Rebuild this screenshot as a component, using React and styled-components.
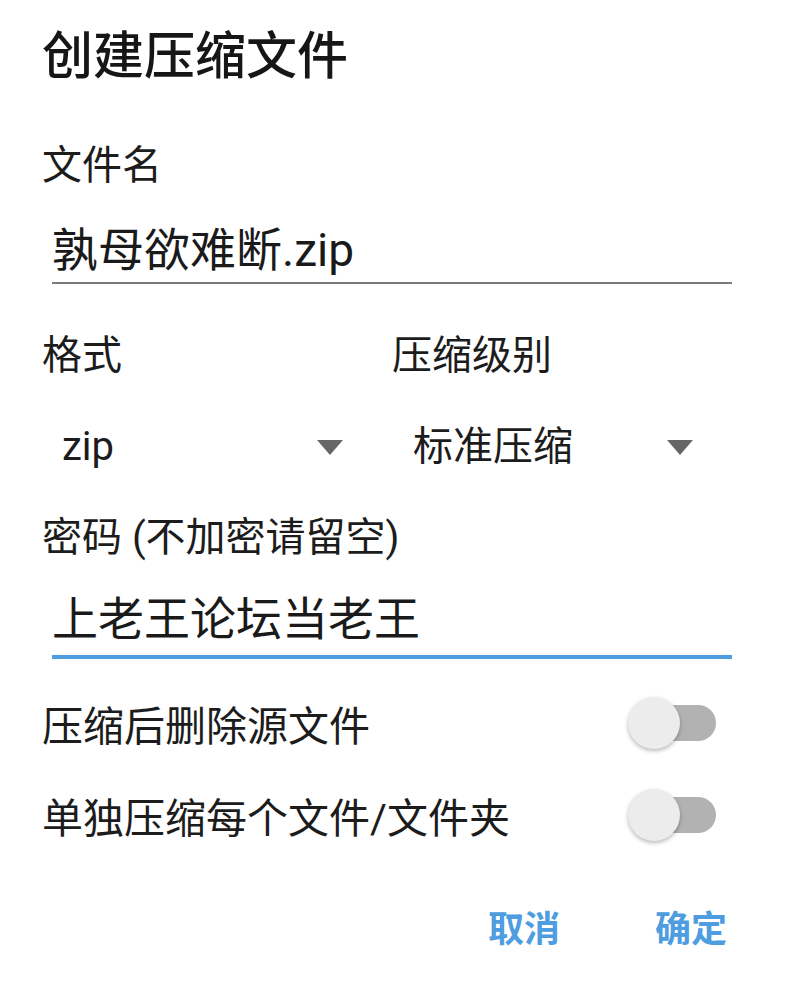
import React from 'react';
import styled, { createGlobalStyle } from 'styled-components';

const Global = createGlobalStyle`
  body {
    margin: 0;
    background: #ffffff;
    font-family: Roboto, "Noto Sans CJK SC", sans-serif;
    color: #1c1c1c;
  }
`;

const Dialog = styled.div`
  width: 800px;
  height: 1000px;
  box-sizing: border-box;
  padding: 27px 68px 0 42px;
  display: flex;
  flex-direction: column;
`;

const Title = styled.div`
  height: 60px;
  line-height: 60px;
  font-size: 51px;
  font-weight: 500;
  color: #161616;
`;

const Label = styled.div`
  height: 40px;
  line-height: 40px;
  font-size: 40px;
  margin-top: ${p => p.$top}px;
  white-space: nowrap;
`;

const Input = styled.div`
  margin: ${p => p.$top}px 0 0 10px;
  height: 54px;
  line-height: 54px;
  font-size: 46px;
  padding-bottom: ${p => p.$pad}px;
  border-bottom: ${p => p.$focus ? '4px solid #4d9de0' : '2px solid #7a7a7a'};
  color: #1a1a1a;
`;

const Columns = styled.div`
  display: grid;
  grid-template-columns: 350px 350px;
  margin-top: ${p => p.$top}px;
`;

const Select = styled.div`
  height: 50px;
  display: flex;
  align-items: center;
  justify-content: space-between;
  padding: 0 49px 0 ${p => p.$indent}px;
  font-size: 40px;
  line-height: 50px;
`;

const Caret = styled.span`
  width: 0;
  height: 0;
  border-left: 13px solid transparent;
  border-right: 13px solid transparent;
  border-top: 15px solid #666666;
`;

const SwitchRow = styled.div`
  height: 60px;
  margin-top: ${p => p.$top}px;
  display: flex;
  align-items: center;
  justify-content: space-between;
  font-size: 41px;
`;

const Switch = styled.div`
  position: relative;
  width: 88px;
  height: 52px;
  margin-right: 16px;
`;

const Track = styled.div`
  position: absolute;
  left: 12px;
  top: 8px;
  width: 76px;
  height: 36px;
  border-radius: 18px;
  background: #b2b2b2;
`;

const Thumb = styled.div`
  position: absolute;
  left: 0;
  top: 0;
  width: 52px;
  height: 52px;
  border-radius: 50%;
  background: #ececec;
  box-shadow: 0 2px 4px rgba(0, 0, 0, 0.28);
`;

const Actions = styled.div`
  margin-top: 60px;
  height: 50px;
  display: flex;
  justify-content: flex-end;
  align-items: center;
  gap: 95px;
  padding-right: 5px;
`;

const Action = styled.div`
  font-size: 36px;
  font-weight: 700;
  color: #4d9de0;
  line-height: 50px;
`;

function Toggle() {
  return (
    <Switch>
      <Track />
      <Thumb />
    </Switch>
  );
}

export default function App() {
  return (
    <>
      <Global />
      <Dialog>
        <Title>创建压缩文件</Title>
        <Label $top={59}>文件名</Label>
        <Input $top={37} $pad={5}>孰母欲难断.zip</Input>
        <Columns $top={52}>
          <Label $top={0}>格式</Label>
          <Label $top={0}>压缩级别</Label>
        </Columns>
        <Columns $top={46}>
          <Select $indent={20}>zip<Caret /></Select>
          <Select $indent={21}>标准压缩<Caret /></Select>
        </Columns>
        <Label $top={46}>密码 (不加密请留空)</Label>
        <Input $top={34} $pad={9} $focus>上老王论坛当老王</Input>
        <SwitchRow $top={34}>
          压缩后删除源文件
          <Toggle />
        </SwitchRow>
        <SwitchRow $top={32}>
          单独压缩每个文件/文件夹
          <Toggle />
        </SwitchRow>
        <Actions>
          <Action>取消</Action>
          <Action>确定</Action>
        </Actions>
      </Dialog>
    </>
  );
}
